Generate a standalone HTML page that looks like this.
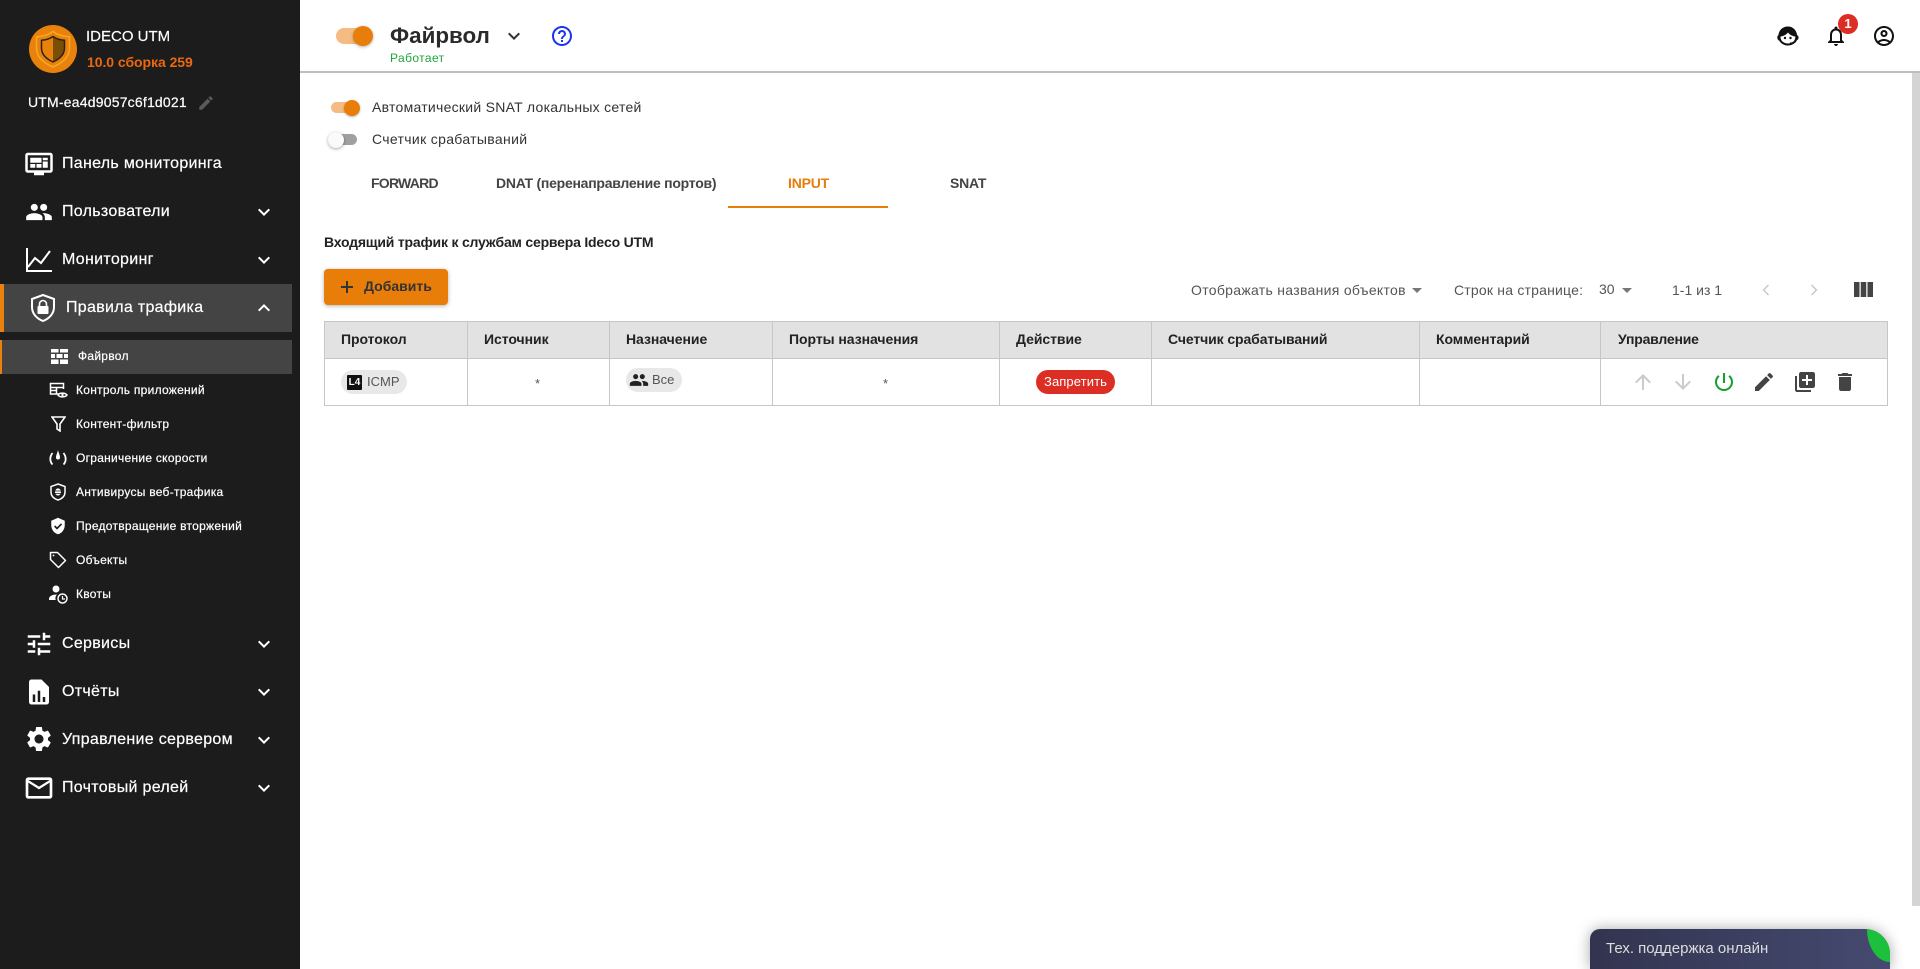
<!DOCTYPE html>
<html lang="ru"><head><meta charset="utf-8"><title>Ideco UTM</title>
<style>
html,body{margin:0;padding:0;background:#fff;width:1920px;height:969px;overflow:hidden}
body{position:relative;font-family:"Liberation Sans",Arial,sans-serif}
.t{position:absolute;line-height:20px;white-space:nowrap}
.b{position:absolute;box-sizing:border-box}
svg{position:absolute;display:block}
.m{color:#fff;font-size:16px;left:62px;letter-spacing:.3px;-webkit-text-stroke:.2px #fff}
.s{color:#fff;font-size:12px;left:76px;letter-spacing:.27px;-webkit-text-stroke:.2px #fff}
.h{font-size:14px;font-weight:bold;color:#222;top:329px;letter-spacing:-.05px}
.l{background:#c6c6c6;position:absolute}
</style></head><body>
<!-- sidebar -->
<div class="b" style="left:0;top:0;width:300px;height:969px;background:#1c1c1c"></div>
<div class="b" style="left:29px;top:25px;width:48px;height:48px;border-radius:50%;background:#e8820c"></div>
<svg style="left:29px;top:25px" width="48" height="48" viewBox="0 0 48 48"><path d="M24 6.500c4.500 3.500 10.500 5 16.500 5.300V23c0 9-7 15-16.500 19C14.500 38 7.500 32 7.500 23V11.800C13.500 11.500 19.500 10 24 6.500z" fill="none" stroke="#f6a623" stroke-width="1.600"/><path d="M24 11.500c3.500 2.500 7.500 3.500 11.500 3.800V23c0 6.500-5 11-11.500 14V11.500z" fill="#7a4f05"/><path d="M24 11.500c-3.500 2.500-7.500 3.500-11.500 3.800V23c0 6.500 5 11 11.500 14 6.500-3 11.500-7.500 11.500-14v-7.700c-4-.3-8-1.300-11.500-3.800z" fill="none" stroke="#2b2118" stroke-width="1.500"/></svg>
<div class="t" style="left:86px;top:27px;font-size:15px;color:#fff;-webkit-text-stroke:.15px #fff">IDECO UTM</div>
<div class="t" style="left:87px;top:52px;font-size:14px;font-weight:bold;color:#e8690f;letter-spacing:-.05px">10.0 сборка 259</div>
<div class="t" style="left:28px;top:92px;font-size:14px;color:#fff;letter-spacing:.2px;-webkit-text-stroke:.2px #fff">UTM-ea4d9057c6f1d021</div>
<svg style="left:197px;top:94px" width="18" height="18" viewBox="0 0 24 24" fill="#5a5a5a"><path d="M3 17.25V21h3.75L17.81 9.94l-3.75-3.75L3 17.25zM20.71 7.04c.39-.39.39-1.02 0-1.41l-2.34-2.34c-.39-.39-1.02-.39-1.41 0l-1.83 1.83 3.75 3.75 1.83-1.83z"/></svg>

<svg style="left:24px;top:149px" width="30" height="30" viewBox="0 0 24 24" fill="#fff"><path d="M21 3H3c-1.1 0-2 .9-2 2v12c0 1.1.9 2 2 2h5v2h8v-2h5c1.1 0 2-.9 2-2V5c0-1.1-.9-2-2-2zm0 14H3V5h18v12z"/><path d="M5 7h9v4H5zM15 7h4v2h-4zM15 10h4v5h-4zM5 12h4v3H5zM10 12h4v3h-4z"/></svg>
<div class="t m" style="top:154px">Панель мониторинга</div>

<svg style="left:25px;top:198px" width="28" height="28" viewBox="0 0 24 24" fill="#fff"><path d="M16 11c1.66 0 2.99-1.34 2.99-3S17.66 5 16 5c-1.66 0-3 1.34-3 3s1.34 3 3 3zm-8 0c1.66 0 2.99-1.34 2.99-3S9.66 5 8 5C6.34 5 5 6.34 5 8s1.34 3 3 3zm0 2c-2.33 0-7 1.17-7 3.5V19h14v-2.5c0-2.33-4.67-3.5-7-3.5zm8 0c-.29 0-.62.02-.97.05 1.16.84 1.97 1.97 1.97 3.45V19h6v-2.5c0-2.33-4.67-3.5-7-3.5z"/></svg>
<div class="t m" style="top:202px">Пользователи</div>

<svg style="left:25px;top:247px" width="28" height="26" viewBox="0 0 28 26" fill="none" stroke="#fff" stroke-width="2"><path d="M2 1v23h25"/><path d="M3 20l7-9 6 5 9-12"/></svg>
<div class="t m" style="top:250px">Мониторинг</div>

<div class="b" style="left:0;top:284px;width:292px;height:48px;background:#444"></div>
<div class="b" style="left:0;top:284px;width:4px;height:48px;background:#e8820c"></div>
<svg style="left:28px;top:293px" width="30" height="30" viewBox="0 0 30 30"><path d="M15 2l11 4v8c0 6.500-4.500 11.500-11 14C8.500 25.500 4 20.500 4 14V6z" fill="none" stroke="#fff" stroke-width="2"/><rect x="9.500" y="13" width="11" height="8" rx="1" fill="#fff"/><path d="M11.500 13v-2a3.500 3.500 0 0 1 7 0v2" fill="none" stroke="#fff" stroke-width="1.600"/></svg>
<div class="t m" style="left:66px;top:298px">Правила трафика</div>

<div class="b" style="left:0;top:340px;width:292px;height:34px;background:#444"></div>
<div class="b" style="left:0;top:340px;width:2px;height:34px;background:#e8820c"></div>
<svg style="left:51px;top:349px" width="17" height="15" viewBox="0 0 17 15" fill="#fff"><path d="M0 0h7.500v3.500H0zM9 0h8v3.500H9zM0 5h4v4H0zM5.500 5h6v4h-6zM13 5h4v4h-4zM0 10.500h7.500V15H0zM9 10.500h8V15H9z"/></svg>
<div class="t s" style="left:78px;top:346px">Файрвол</div>

<svg style="left:49px;top:382px" width="19" height="17" viewBox="0 0 19 17" fill="none" stroke="#fff" stroke-width="1.500"><path d="M11 12H1.500V1.500h13V7M1.500 5.500h13M7.500 5.500V12M1.500 8.500h6"/><path d="M9 13c1.500-2.500 7-2.500 9 0-2 2.500-7.500 2.500-9 0z" fill="#1c1c1c"/><circle cx="13.500" cy="13" r="1.200" fill="#fff" stroke="none"/></svg>
<div class="t s" style="top:380px">Контроль приложений</div>

<svg style="left:51px;top:416px" width="15" height="16" viewBox="0 0 15 16" fill="none" stroke="#fff" stroke-width="1.600"><path d="M1 1h13L9 8v7l-3-2V8z"/></svg>
<div class="t s" style="top:414px">Контент-фильтр</div>

<svg style="left:49px;top:449px" width="18" height="18" viewBox="0 0 18 18" fill="none" stroke="#fff" stroke-width="1.800"><path d="M3.500 4C.5 8 .7 12.500 3.500 15.500M14.500 4c3 4 2.800 8.500 0 11.500"/><path d="M9 1c.6 3 2 5 2 7.500a2 2 0 0 1-4 0C7 6 8.400 4 9 1z" fill="#fff" stroke="none"/></svg>
<div class="t s" style="top:448px">Ограничение скорости</div>

<svg style="left:50px;top:483px" width="16" height="18" viewBox="0 0 16 18"><path d="M8 1l7 2.500V9c0 4-3 6.700-7 8-4-1.300-7-4-7-8V3.500z" fill="none" stroke="#fff" stroke-width="1.500"/><ellipse cx="8" cy="9" rx="3" ry="3.600" fill="#fff"/><path d="M5 8h6M5 10.500h6" stroke="#1c1c1c" stroke-width=".8"/></svg>
<div class="t s" style="top:482px">Антивирусы веб-трафика</div>

<svg style="left:49px;top:517px" width="18" height="18" viewBox="0 0 24 24"><path d="M12 1L3 5v6c0 5.550 3.840 10.740 9 12 5.160-1.260 9-6.450 9-12V5l-9-4z" fill="#fff"/><path d="M7.500 12l3.200 3.200 6-6" fill="none" stroke="#1c1c1c" stroke-width="2.200"/></svg>
<div class="t s" style="top:516px">Предотвращение вторжений</div>

<svg style="left:49px;top:551px" width="18" height="18" viewBox="0 0 18 18" fill="none" stroke="#fff" stroke-width="1.500"><path d="M1.500 1.500h7l8 8-7 7-8-8z" stroke-linejoin="round"/><circle cx="4.500" cy="4.500" r=".9" fill="#fff" stroke="none"/></svg>
<div class="t s" style="top:550px">Объекты</div>

<svg style="left:48px;top:585px" width="20" height="19" viewBox="0 0 20 19"><circle cx="8" cy="4" r="3.500" fill="#fff"/><path d="M1 14c0-3 3.500-4.500 8-4.500-1.500 1.500-2 3.500-1.300 5.500H1z" fill="#fff"/><circle cx="14.500" cy="13.500" r="4.500" fill="none" stroke="#fff" stroke-width="1.500"/><path d="M14.500 11v3h2.500" fill="none" stroke="#fff" stroke-width="1.200"/></svg>
<div class="t s" style="top:584px">Квоты</div>

<svg style="left:24px;top:629px" width="30" height="30" viewBox="0 0 24 24" fill="#fff"><path d="M3 17v2h6v-2H3zM3 5v2h10V5H3zm10 16v-2h8v-2h-8v-2h-2v6h2zM7 9v2H3v2h4v2h2V9H7zm14 4v-2H11v2h10zm-6-4h2V7h4V5h-4V3h-2v6z"/></svg>
<div class="t m" style="top:634px">Сервисы</div>

<svg style="left:24px;top:677px" width="30" height="30" viewBox="0 0 24 24"><path d="M14 2H6c-1.1 0-2 .9-2 2v16c0 1.1.9 2 2 2h12c1.1 0 2-.9 2-2V8l-6-6z" fill="#fff"/><path d="M7 14h2v6H7zM11 11h2v9h-2zM15 16h2v4h-2z" fill="#1c1c1c"/></svg>
<div class="t m" style="top:682px">Отчёты</div>

<svg style="left:24px;top:724px" width="30" height="30" viewBox="0 0 24 24" fill="#fff"><path d="M19.14 12.94c.04-.3.06-.61.06-.94 0-.32-.02-.64-.07-.94l2.03-1.58c.18-.14.23-.41.12-.61l-1.92-3.32c-.12-.22-.37-.29-.59-.22l-2.39.96c-.5-.38-1.03-.7-1.62-.94l-.36-2.54c-.04-.24-.24-.41-.48-.41h-3.84c-.24 0-.43.17-.47.41l-.36 2.54c-.59.24-1.13.57-1.62.94l-2.39-.96c-.22-.08-.47 0-.59.22L2.74 8.87c-.12.21-.08.47.12.61l2.03 1.58c-.05.3-.09.63-.09.94s.02.64.07.94l-2.03 1.58c-.18.14-.23.41-.12.61l1.92 3.32c.12.22.37.29.59.22l2.39-.96c.5.38 1.03.7 1.62.94l.36 2.54c.05.24.24.41.48.41h3.84c.24 0 .44-.17.47-.41l.36-2.54c.59-.24 1.13-.56 1.62-.94l2.39.96c.22.08.47 0 .59-.22l1.92-3.32c.12-.22.07-.47-.12-.61l-2.01-1.58zM12 15.6c-1.98 0-3.6-1.62-3.6-3.6s1.62-3.6 3.6-3.6 3.6 1.62 3.6 3.6-1.62 3.6-3.6 3.6z"/></svg>
<div class="t m" style="top:730px">Управление сервером</div>

<svg style="left:23px;top:772px" width="32" height="32" viewBox="0 0 24 24" fill="#fff"><path d="M20 4H4c-1.1 0-2 .9-2 2v12c0 1.1.9 2 2 2h16c1.1 0 2-.9 2-2V6c0-1.1-.9-2-2-2zm0 14H4V8l8 5 8-5v10zm-8-7L4 6h16l-8 5z"/></svg>
<div class="t m" style="top:778px">Почтовый релей</div>

<svg style="left:252px;top:200px" width="24" height="24" viewBox="0 0 24 24" fill="#fff"><path d="M16.59 8.59L12 13.17 7.41 8.59 6 10l6 6 6-6z"/></svg>
<svg style="left:252px;top:248px" width="24" height="24" viewBox="0 0 24 24" fill="#fff"><path d="M16.59 8.59L12 13.17 7.41 8.59 6 10l6 6 6-6z"/></svg>
<svg style="left:252px;top:296px" width="24" height="24" viewBox="0 0 24 24" fill="#fff"><path d="M12 8l-6 6 1.41 1.41L12 10.83l4.59 4.58L18 14z"/></svg>
<svg style="left:252px;top:632px" width="24" height="24" viewBox="0 0 24 24" fill="#fff"><path d="M16.59 8.59L12 13.17 7.41 8.59 6 10l6 6 6-6z"/></svg>
<svg style="left:252px;top:680px" width="24" height="24" viewBox="0 0 24 24" fill="#fff"><path d="M16.59 8.59L12 13.17 7.41 8.59 6 10l6 6 6-6z"/></svg>
<svg style="left:252px;top:728px" width="24" height="24" viewBox="0 0 24 24" fill="#fff"><path d="M16.59 8.59L12 13.17 7.41 8.59 6 10l6 6 6-6z"/></svg>
<svg style="left:252px;top:776px" width="24" height="24" viewBox="0 0 24 24" fill="#fff"><path d="M16.59 8.59L12 13.17 7.41 8.59 6 10l6 6 6-6z"/></svg>

<!-- top bar -->
<div class="b" style="left:300px;top:71px;width:1620px;height:2px;background:#bdbdbd"></div>
<div class="b" style="left:336px;top:28px;width:32px;height:16px;border-radius:8px;background:#f4bc82"></div>
<div class="b" style="left:353px;top:26px;width:20px;height:20px;border-radius:50%;background:#e87d0a;box-shadow:0 1px 3px rgba(0,0,0,.3)"></div>
<div class="t" style="left:390px;top:23px;font-size:22.400px;line-height:26px;font-weight:bold;color:#2a2a2a">Файрвол</div>
<div class="t" style="left:390px;top:48px;font-size:12px;color:#1fa53c;letter-spacing:.4px">Работает</div>
<svg style="left:502px;top:24px" width="24" height="24" viewBox="0 0 24 24" fill="#333"><path d="M16.59 8.59L12 13.17 7.41 8.59 6 10l6 6 6-6z"/></svg>
<svg style="left:550px;top:24px" width="24" height="24" viewBox="0 0 24 24" fill="#1a35f0"><path d="M11 18h2v-2h-2v2zm1-16C6.48 2 2 6.48 2 12s4.48 10 10 10 10-4.48 10-10S17.52 2 12 2zm0 18c-4.41 0-8-3.59-8-8s3.59-8 8-8 8 3.59 8 8-3.59 8-8 8zm0-14c-2.21 0-4 1.79-4 4h2c0-1.1.9-2 2-2s2 .9 2 2c0 2-3 1.75-3 5h2c0-2.25 3-2.5 3-5 0-2.21-1.79-4-4-4z"/></svg>

<svg style="left:1776px;top:24px" width="24" height="24" viewBox="0 0 24 24"><path d="M12 2.500C6.500 2.500 2.800 6.300 2.500 11c-1 .5-1.200 1.700-1.200 2.800 0 1.400.9 2.500 2 2.900 1.700 2.900 4.900 4.800 8.700 4.800 4 0 7.300-2.100 8.900-5.200 1-.5 1.700-1.400 1.700-2.500 0-1.300-.6-2.200-1.500-2.800C20.500 6.300 17 2.500 12 2.500z" fill="#111"/><path d="M4.500 12.500c2.800-.3 5.500-1.600 7.500-4 1.600 2.200 4.200 3.700 7.300 4 .3 4.300-3.200 7-7.300 7s-7.800-2.700-7.500-7z" fill="#fff"/><circle cx="9" cy="14" r="1.200" fill="#111"/><circle cx="14.500" cy="14" r="1.200" fill="#111"/><path d="M20 16.500c-1 1.700-3 2.800-6 2.800" fill="none" stroke="#111" stroke-width="1.500"/></svg>
<svg style="left:1824px;top:24px" width="24" height="24" viewBox="0 0 24 24" fill="#111"><path d="M12 22c1.1 0 2-.9 2-2h-4c0 1.1.9 2 2 2zm6-6v-5c0-3.07-1.63-5.64-4.500-6.320V4c0-.83-.67-1.500-1.500-1.500s-1.500.67-1.500 1.500v.68C7.640 5.360 6 7.920 6 11v5l-2 2v1h16v-1l-2-2zm-2 1H8v-6c0-2.480 1.510-4.500 4-4.500s4 2.020 4 4.500v6z"/></svg>
<div class="b" style="left:1838px;top:14px;width:20px;height:20px;border-radius:50%;background:#dc2e24;color:#fff;font-size:13px;font-weight:bold;line-height:20px;text-align:center">1</div>
<svg style="left:1872px;top:24px" width="24" height="24" viewBox="0 0 24 24" fill="#111"><path d="M12 2C6.48 2 2 6.48 2 12s4.48 10 10 10 10-4.48 10-10S17.52 2 12 2zM7.35 18.5C8.66 17.56 10.26 17 12 17s3.34.56 4.65 1.5c-1.31.94-2.91 1.5-4.65 1.5s-3.34-.56-4.65-1.5zm10.79-1.38C16.45 15.8 14.32 15 12 15s-4.45.8-6.14 2.12C4.7 15.73 4 13.95 4 12c0-4.42 3.58-8 8-8s8 3.58 8 8c0 1.95-.7 3.73-1.86 5.12zM12 6c-1.93 0-3.5 1.57-3.5 3.5S10.07 13 12 13s3.5-1.57 3.5-3.5S13.93 6 12 6zm0 5c-.83 0-1.5-.67-1.5-1.5S11.17 8 12 8s1.5.67 1.5 1.5S12.83 11 12 11z"/></svg>

<!-- scrollbar -->
<div class="b" style="left:1912px;top:73px;width:8px;height:833px;background:#d4d4d4"></div>

<!-- toggles -->
<div class="b" style="left:331px;top:102px;width:24px;height:11px;border-radius:6px;background:#f4bc82"></div>
<div class="b" style="left:344px;top:100px;width:16px;height:16px;border-radius:50%;background:#e87d0a;box-shadow:0 1px 2px rgba(0,0,0,.3)"></div>
<div class="t" style="left:372px;top:97px;font-size:14px;color:#333;letter-spacing:.27px">Автоматический SNAT локальных сетей</div>
<div class="b" style="left:334px;top:134px;width:23px;height:11px;border-radius:6px;background:#a0a0a0"></div>
<div class="b" style="left:328px;top:132px;width:16px;height:16px;border-radius:50%;background:#fafafa;box-shadow:0 1px 3px rgba(0,0,0,.35)"></div>
<div class="t" style="left:372px;top:129px;font-size:14px;color:#333;letter-spacing:.33px">Счетчик срабатываний</div>

<!-- tabs -->
<div class="t" style="left:371px;top:173px;font-size:14px;font-weight:bold;color:#444;letter-spacing:-.75px">FORWARD</div>
<div class="t" style="left:496px;top:173px;font-size:14px;font-weight:bold;color:#444;letter-spacing:-.25px">DNAT (перенаправление портов)</div>
<div class="t" style="left:788px;top:173px;font-size:14px;font-weight:bold;color:#e87d0a;letter-spacing:-.2px">INPUT</div>
<div class="t" style="left:950px;top:173px;font-size:14px;font-weight:bold;color:#444;letter-spacing:-.2px">SNAT</div>
<div class="b" style="left:728px;top:206px;width:160px;height:2px;background:#e87d0a"></div>

<div class="t" style="left:324px;top:232px;font-size:14px;font-weight:bold;color:#222;letter-spacing:-.2px">Входящий трафик к службам сервера Ideco UTM</div>

<div class="b" style="left:324px;top:269px;width:124px;height:36px;border-radius:4px;background:#e87d0a;box-shadow:0 1px 4px rgba(0,0,0,.3)"></div>
<svg style="left:337px;top:277px" width="20" height="20" viewBox="0 0 20 20" fill="#333"><path d="M9 4h2v5h5v2h-5v5H9v-5H4V9h5z"/></svg>
<div class="t" style="left:364px;top:276px;font-size:14px;font-weight:bold;color:#333">Добавить</div>

<!-- toolbar -->
<div class="t" style="left:1191px;top:280px;font-size:14px;color:#555;letter-spacing:.3px">Отображать названия объектов</div>
<svg style="left:1412px;top:288px" width="10" height="5" viewBox="0 0 10 5" fill="#777"><path d="M0 0h10L5 5z"/></svg>
<div class="t" style="left:1454px;top:280px;font-size:14px;color:#555;letter-spacing:.2px">Строк на странице:</div>
<div class="t" style="left:1599px;top:279px;font-size:14px;color:#555">30</div>
<svg style="left:1622px;top:288px" width="10" height="5" viewBox="0 0 10 5" fill="#777"><path d="M0 0h10L5 5z"/></svg>
<div class="t" style="left:1672px;top:280px;font-size:14px;color:#555">1-1 из 1</div>
<svg style="left:1754px;top:278px" width="24" height="24" viewBox="0 0 24 24" fill="none" stroke="#c4c4c4" stroke-width="1.300"><path d="M14.500 7l-5 5 5 5"/></svg>
<svg style="left:1802px;top:278px" width="24" height="24" viewBox="0 0 24 24" fill="none" stroke="#c4c4c4" stroke-width="1.300"><path d="M9.500 7l5 5-5 5"/></svg>
<svg style="left:1854px;top:282px" width="19" height="15" viewBox="0 0 19 15" fill="#444"><path d="M0 0h5.500v15H0zM6.750 0h5.500v15h-5.500zM13.500 0H19v15h-5.500z"/></svg>

<!-- table -->
<div class="b" style="left:324px;top:321px;width:1564px;height:37px;background:#e2e2e2"></div>
<div class="l" style="left:324px;top:321px;width:1564px;height:1px"></div>
<div class="l" style="left:324px;top:358px;width:1564px;height:1px"></div>
<div class="l" style="left:324px;top:405px;width:1564px;height:1px"></div>
<div class="l" style="left:324px;top:321px;width:1px;height:85px"></div>
<div class="l" style="left:467px;top:321px;width:1px;height:85px"></div>
<div class="l" style="left:609px;top:321px;width:1px;height:85px"></div>
<div class="l" style="left:772px;top:321px;width:1px;height:85px"></div>
<div class="l" style="left:999px;top:321px;width:1px;height:85px"></div>
<div class="l" style="left:1151px;top:321px;width:1px;height:85px"></div>
<div class="l" style="left:1419px;top:321px;width:1px;height:85px"></div>
<div class="l" style="left:1600px;top:321px;width:1px;height:85px"></div>
<div class="l" style="left:1887px;top:321px;width:1px;height:85px"></div>
<div class="t h" style="left:341px">Протокол</div>
<div class="t h" style="left:484px">Источник</div>
<div class="t h" style="left:626px">Назначение</div>
<div class="t h" style="left:789px">Порты назначения</div>
<div class="t h" style="left:1016px">Действие</div>
<div class="t h" style="left:1168px;letter-spacing:-.1px">Счетчик срабатываний</div>
<div class="t h" style="left:1436px">Комментарий</div>
<div class="t h" style="left:1618px;letter-spacing:-.2px">Управление</div>

<div class="b" style="left:341px;top:370px;width:66px;height:24px;border-radius:12px;background:#e8e8e8"></div>
<div class="b" style="left:347px;top:375px;width:15px;height:15px;border-radius:1px;background:#111;color:#fff;font-size:10px;font-weight:bold;line-height:15px;text-align:center">L4</div>
<div class="t" style="left:367px;top:372px;font-size:13px;color:#555">ICMP</div>
<div class="t" style="left:535px;top:374px;font-size:13px;color:#555">*</div>
<div class="b" style="left:626px;top:368px;width:56px;height:24px;border-radius:12px;background:#e8e8e8"></div>
<svg style="left:629px;top:370px" width="20" height="20" viewBox="0 0 24 24" fill="#222"><path d="M16 11c1.66 0 2.99-1.34 2.99-3S17.66 5 16 5c-1.66 0-3 1.34-3 3s1.34 3 3 3zm-8 0c1.66 0 2.99-1.34 2.99-3S9.66 5 8 5C6.34 5 5 6.34 5 8s1.34 3 3 3zm0 2c-2.33 0-7 1.17-7 3.5V19h14v-2.5c0-2.33-4.67-3.5-7-3.5zm8 0c-.29 0-.62.02-.97.05 1.16.84 1.97 1.97 1.97 3.45V19h6v-2.5c0-2.33-4.67-3.5-7-3.5z"/></svg>
<div class="t" style="left:652px;top:370px;font-size:13px;color:#555">Все</div>
<div class="t" style="left:883px;top:374px;font-size:13px;color:#555">*</div>
<div class="b" style="left:1036px;top:370px;width:79px;height:24px;border-radius:12px;background:#dc2e24;color:#fff;font-size:13px;line-height:24px;text-align:center;letter-spacing:.1px">Запретить</div>

<svg style="left:1631px;top:370px" width="24" height="24" viewBox="0 0 24 24" fill="#cbcbcb"><path d="M4 12l1.41 1.41L11 7.83V20h2V7.83l5.58 5.59L20 12l-8-8-8 8z"/></svg>
<svg style="left:1671px;top:370px" width="24" height="24" viewBox="0 0 24 24" fill="#cbcbcb"><path d="M20 12l-1.41-1.41L13 16.17V4h-2v12.17l-5.58-5.59L4 12l8 8 8-8z"/></svg>
<svg style="left:1712px;top:370px" width="24" height="24" viewBox="0 0 24 24" fill="#14a02d"><path d="M13 3h-2v10h2V3zm4.83 2.17l-1.42 1.42C17.99 7.86 19 9.81 19 12c0 3.87-3.13 7-7 7s-7-3.13-7-7c0-2.19 1.01-4.14 2.58-5.42L6.17 5.17C4.23 6.82 3 9.26 3 12c0 4.97 4.03 9 9 9s9-4.03 9-9c0-2.74-1.23-5.18-3.17-6.83z"/></svg>
<svg style="left:1752px;top:370px" width="24" height="24" viewBox="0 0 24 24" fill="#444"><path d="M3 17.25V21h3.75L17.81 9.94l-3.75-3.75L3 17.25zM20.71 7.04c.39-.39.39-1.02 0-1.41l-2.34-2.34c-.39-.39-1.02-.39-1.41 0l-1.83 1.83 3.75 3.75 1.83-1.83z"/></svg>
<svg style="left:1793px;top:370px" width="24" height="24" viewBox="0 0 24 24" fill="#444"><path d="M4 6H2v14c0 1.1.9 2 2 2h14v-2H4V6zm16-4H8c-1.1 0-2 .9-2 2v12c0 1.1.9 2 2 2h12c1.1 0 2-.9 2-2V4c0-1.1-.9-2-2-2zm-1 9h-4v4h-2v-4H9V9h4V5h2v4h4v2z"/></svg>
<svg style="left:1833px;top:370px" width="24" height="24" viewBox="0 0 24 24" fill="#444"><path d="M6 19c0 1.1.9 2 2 2h8c1.1 0 2-.9 2-2V7H6v12zM19 4h-3.5l-1-1h-5l-1 1H5v2h14V4z"/></svg>

<!-- support widget -->
<div class="b" style="left:1590px;top:929px;width:300px;height:40px;border-radius:10px 25px 0 0;background:linear-gradient(90deg,#32344f,#454a70);box-shadow:0 0 14px rgba(0,0,0,.35);overflow:hidden">
<div class="b" style="left:277px;top:0;width:23px;height:33px;background:#1cc03c;border-radius:0 0 0 23px/0 0 0 33px"></div></div>
<div class="t" style="left:1606px;top:939px;font-size:15px;color:#ddd">Тех. поддержка онлайн</div>
</body></html>
